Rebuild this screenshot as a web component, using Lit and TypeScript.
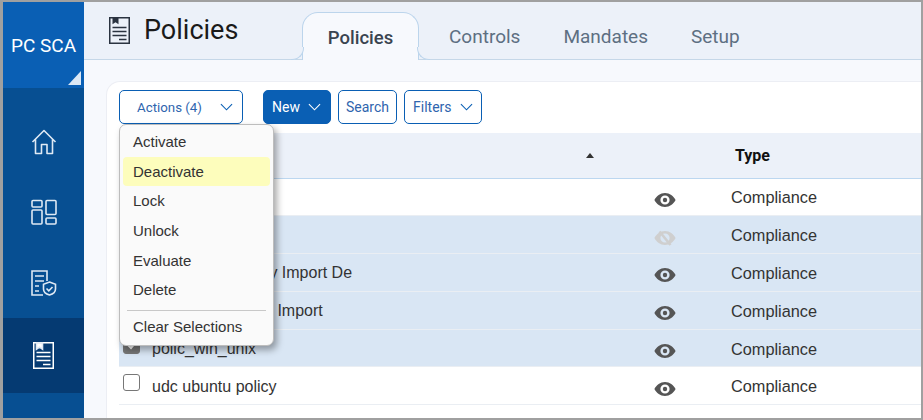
import { LitElement, html, css, svg } from "lit";
import { customElement } from "lit/decorators.js";

const chevron = html`<svg class="chev" viewBox="0 0 14 8" fill="none" stroke="currentColor" stroke-width="1.2"><path d="M1 1l6 6 6-6"/></svg>`;

const eye = html`<svg class="eye" viewBox="0 0 22 16"><path fill="#555" fill-rule="evenodd" d="M11 1C6.200 1 2.600 4.200.4 8c2.200 3.800 5.800 7 10.600 7s8.400-3.200 10.600-7C19.400 4.200 15.800 1 11 1zm0 2.400a4.600 4.600 0 1 1 0 9.200 4.600 4.600 0 0 1 0-9.200z"/><circle cx="11" cy="8" r="2.200" fill="#555"/></svg>`;

const eyeOff = html`<svg class="eye" viewBox="0 0 22 16"><path fill="#cfcfcf" fill-rule="evenodd" d="M11 1C6.200 1 2.600 4.200.4 8c2.200 3.800 5.800 7 10.600 7s8.400-3.200 10.600-7C19.400 4.200 15.800 1 11 1zm0 2.400a4.600 4.600 0 1 1 0 9.200 4.600 4.600 0 0 1 0-9.200z"/><path stroke="#cfcfcf" stroke-width="2.600" d="M5.500 1.500l11 13.500"/></svg>`;

const policyDoc = (stroke: string) => svg`<path d="M.75.75h19.5v25.5H.75z" fill="none" stroke="${stroke}" stroke-width="1.5"/><path d="M3.500 1v6.200l3-2 3 2V1z" fill="${stroke}"/><path d="M3.500 10.500h14M3.500 14.500h14M3.500 18.500h14M10 22.500h7.500" stroke="${stroke}" stroke-width="1.400" fill="none"/>`;

interface Row { name: string; sel: boolean; hidden?: boolean; }
const rows: Row[] = [
  { name: "policy_1", sel: false },
  { name: "policy_2", sel: true, hidden: true },
  { name: "Windows 1 Policy Import De", sel: true },
  { name: "Windows2 Policy Import", sel: true },
  { name: "polic_win_unix", sel: true },
  { name: "udc ubuntu policy", sel: false },
];

@customElement("app-root")
export class AppRoot extends LitElement {
  static styles = css`
    :host { display: block; width: 923px; height: 420px; overflow: hidden; font-family: "Liberation Sans", Arial, sans-serif; }
    * { box-sizing: border-box; }
    .frame { width: 923px; height: 420px; border: solid #a0a0a0; border-width: 2px 2px 2px 3px; display: flex; background: #f7f9fd; overflow: hidden; }
    .side { width: 81px; flex: none; background: #074f92; display: flex; flex-direction: column; overflow: hidden; }
    .logo { height: 86px; flex: none; background: #0a5fb4; color: #fff; font: 400 19px Roboto, sans-serif; display: flex; align-items: center; justify-content: center; position: relative; }
    .tri { position: absolute; right: 3px; bottom: 3px; width: 13px; height: 14px; background: #dce8f5; clip-path: polygon(100% 0, 100% 100%, 0 100%); }
    .nav { display: flex; flex-direction: column; align-items: stretch; padding-top: 18px; }
    .nav div { height: 71px; flex: none; display: flex; align-items: center; justify-content: center; }
    .nav div:nth-child(2) { height: 70px; }
    .nav div.a { height: 75px; background: #053a72; }
    .nav svg { display: block; fill: none; stroke: #dfe9f4; stroke-width: 1.6; }
    .main { flex: 1; min-width: 0; display: flex; flex-direction: column; }
    .head { height: 58px; flex: none; background: #ecf1f9; border-bottom: 1px solid #c5d7e8; display: flex; align-items: flex-end; position: relative; }
    .pico { width: 21px; height: 27px; margin: 0 0 15px 25px; flex: none; }
    .title { font: 400 27px Roboto, sans-serif; color: #1a1a1a; width: 172px; padding-left: 14px; flex: none; align-self: flex-start; padding-top: 12px; }
    .tabs { display: flex; align-items: flex-end; height: 100%; }
    .tab { font: 400 19px Roboto, sans-serif; color: #5d6f82; height: 48px; display: flex; align-items: center; padding-top: 2px; }
    .tab.active { width: 117px; justify-content: center; font-size: 18.5px; font-weight: 500; color: #3a4450; background: #f7f9fd; border: 1px solid #bcd5ec; border-bottom: none; border-radius: 16px 16px 0 0; position: relative; margin-bottom: -1px; }
    .tab.active::before, .tab.active::after { content: ""; position: absolute; bottom: 0; width: 12px; height: 12px; background: #ecf1f9; border-bottom: 1px solid #bcd5ec; }
    .tab.active::before { left: -12px; border-right: 1px solid #bcd5ec; border-bottom-right-radius: 12px; }
    .tab.active::after { right: -12px; border-left: 1px solid #bcd5ec; border-bottom-left-radius: 12px; }
    .tab.c { margin-left: 30px; }
    .tab.m, .tab.s { margin-left: 43px; }
    .body { flex: 1; padding: 21px 0 0 22px; min-height: 0; }
    .card { height: 100%; background: #fff; border-top: 1px solid #eceef4; border-left: 1px solid #eceef4; border-top-left-radius: 14px; padding: 8px 0 0 12px; position: relative; }
    .bar { display: flex; height: 34px; gap: 7px; }
    .btn { height: 34px; border: 1px solid #0a5fb4; border-radius: 5px; background: #fff; color: #2f65ae; font: 400 14px Roboto, sans-serif; display: flex; align-items: center; }
    .btn .chev { width: 13px; height: 8px; color: #0a5fb4; flex: none; }
    .actions { width: 124px; gap: 18px; padding-left: 17px; margin-right: 13px; font-size: 13.3px; }
    .new { width: 68px; background: #0a5fb4; color: #fff; gap: 8px; padding-left: 8px; }
    .new .chev { color: #fff; }
    .search { width: 59px; justify-content: center; }
    .filters { width: 78px; gap: 8px; padding-left: 8px; }
    .table { margin-top: 9px; }
    .th, .tr { display: grid; grid-template-columns: 33px 488px 50px 1fr; align-items: center; }
    .th { height: 45.5px; background: #ecf1f9; border-bottom: 1px solid #bcd7f0; font: 700 16px Roboto, sans-serif; color: #111; }
    .th .nm { display: flex; justify-content: space-between; align-items: center; padding-right: 46px; }
    .caret { width: 0; height: 0; border: 4px solid transparent; border-top: none; border-bottom: 5px solid #333; }
    .th .ty { padding-left: 45px; }
    .tr { height: 37.8px; background: #fff; border-bottom: 1px solid #eaeef3; font-size: 16px; color: #333; }
    .tr.sel { background: #d9e6f4; }
    .tr > span { white-space: nowrap; padding-bottom: 0; position: relative; top: 1px; }
    .tr .ty { padding-left: 41px; font-size: 16.3px; }
    .eyec { display: flex; justify-content: center; position: relative; top: 3px; }
    .eye { width: 22px; height: 16px; display: block; }
    .box { width: 17px; height: 17px; margin-left: 4px; border: 1.4px solid #777; border-radius: 3px; background: #fff; position: relative; top: -3px; }
    .box.on { background: #777; display: flex; align-items: center; justify-content: center; }
    .box svg { display: block; width: 12px; height: 12px; fill: none; stroke: #fff; stroke-width: 2; }
    .menu { position: absolute; left: 12px; top: 42px; width: 155px; height: 222px; background: #fafafa; border: 1px solid #bdbdbd; border-radius: 7px; box-shadow: 3px 4px 7px rgba(0,0,0,.35); padding: 2px 3px 0; font-size: 15px; color: #333; z-index: 2; }
    .mi { height: 29.7px; padding-left: 10px; padding-bottom: 1px; display: flex; align-items: center; border-radius: 4px; }
    .mi.hl { background: #fdfdbc; }
    .sep { height: 1px; background: #c8c8c8; margin: 5px 4px 2px 4px; }
    .mi.clr { height: 27px; }
  `;

  render() {
    return html`<div class="frame">
      <aside class="side">
        <div class="logo"><span>PC SCA</span><i class="tri"></i></div>
        <nav class="nav">
          <div><svg width="26" height="26" viewBox="0 0 26 26"><path stroke-linejoin="round" d="M1.500 13L13 1.500 24.500 13M4.500 10.500V24.500h6V15.500h5.500v9h5.500V10.500"/></svg></div>
          <div><svg width="26" height="26" viewBox="0 0 26 26"><rect x="1" y="1.500" width="10" height="6.500" rx="1"/><rect x="1" y="11" width="10" height="14" rx="1"/><rect x="15" y="1.500" width="10" height="14" rx="1"/><rect x="15" y="19" width="10" height="6" rx="1"/></svg></div>
          <div><svg width="26" height="26" viewBox="0 0 26 26"><path d="M12 25H1V1h15v10"/><path d="M4 6h9M4 11h9M4 16h4M4 21h4"/><path d="M18.500 12l6 2.200v4.800c0 3-2.500 5-6 6-3.500-1-6-3-6-6v-4.800z"/><path d="M15.500 18.500l2.300 2.300 3.700-3.800"/></svg></div>
          <div class="a"><svg class="adoc" width="21" height="27" viewBox="0 0 21 27">${policyDoc("#fff")}</svg></div>
          <div><svg width="26" height="26" viewBox="0 0 26 26"><path d="M4 8a11 11 0 0 1 19 3"/></svg></div>
        </nav>
      </aside>
      <main class="main">
        <header class="head">
          <svg class="pico" viewBox="0 0 21 27">${policyDoc("#2a3340")}</svg>
          <div class="title">Policies</div>
          <div class="tabs">
            <div class="tab active">Policies</div>
            <div class="tab c">Controls</div>
            <div class="tab m">Mandates</div>
            <div class="tab s">Setup</div>
          </div>
        </header>
        <section class="body">
          <div class="card">
            <div class="bar">
              <div class="btn actions">Actions (4) ${chevron}</div>
              <div class="btn new">New ${chevron}</div>
              <div class="btn search">Search</div>
              <div class="btn filters">Filters ${chevron}</div>
            </div>
            <div class="table">
              <div class="th"><span></span><span class="nm">Name<i class="caret"></i></span><span></span><span class="ty">Type</span></div>
              ${rows.map(r => html`<div class="tr ${r.sel ? "sel" : ""}">
                <i class="box ${r.sel ? "on" : ""}">${r.sel ? html`<svg viewBox="0 0 12 12"><path d="M2 6l3 3 5-6"/></svg>` : ""}</i>
                <span>${r.name}</span>
                <div class="eyec">${r.hidden ? eyeOff : eye}</div>
                <span class="ty">Compliance</span>
              </div>`)}
            </div>
            <div class="menu">
              <div class="mi">Activate</div>
              <div class="mi hl">Deactivate</div>
              <div class="mi">Lock</div>
              <div class="mi">Unlock</div>
              <div class="mi">Evaluate</div>
              <div class="mi">Delete</div>
              <div class="sep"></div>
              <div class="mi clr">Clear Selections</div>
            </div>
          </div>
        </section>
      </main>
    </div>`;
  }
}
